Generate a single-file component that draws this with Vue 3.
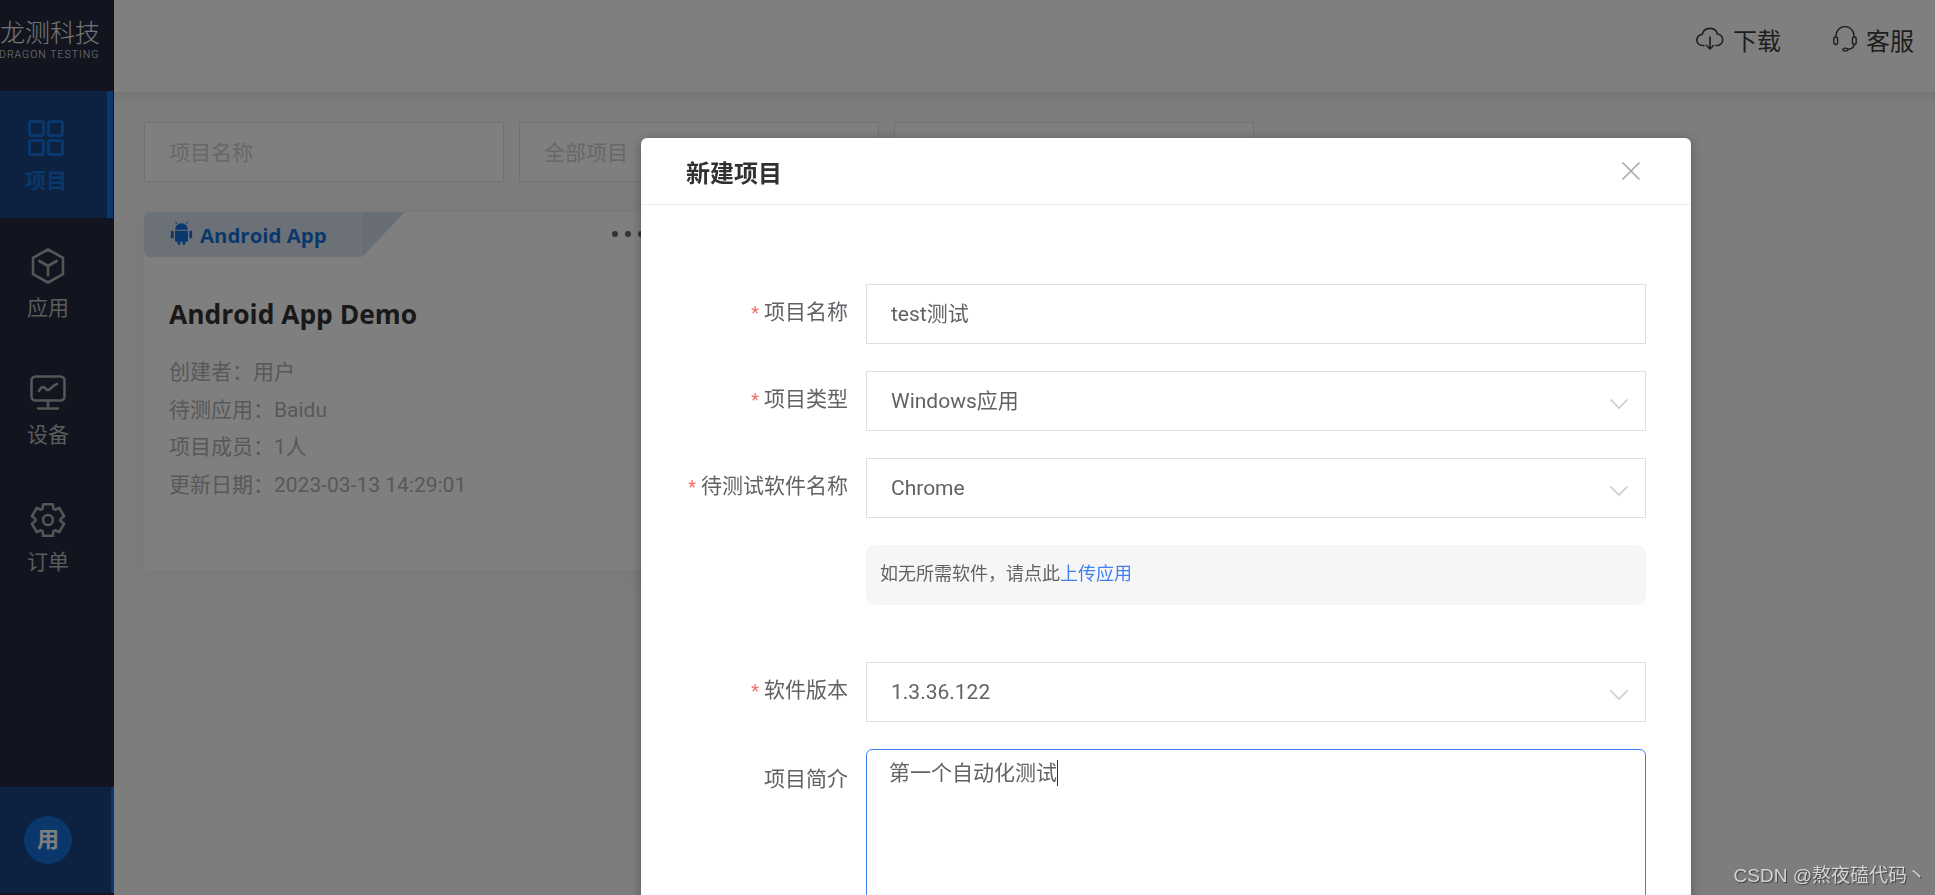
<template>
  <div class="layout">
    <aside class="sidebar">
      <div class="logo">
        <div class="logo-cn">龙测科技</div>
        <div class="logo-en">DRAGON TESTING</div>
      </div>
      <nav class="nav">
        <div
          v-for="item in navItems"
          :key="item.key"
          :class="['nav-item', { active: item.key === 'project' }]"
        >
          <svg v-if="item.key === 'project'" class="nav-icon" viewBox="0 0 36 36" fill="none" stroke="currentColor" stroke-width="3">
            <rect x="1.500" y="1.500" width="14" height="14" rx="2" />
            <rect x="20.500" y="1.500" width="14" height="14" rx="2" />
            <rect x="1.500" y="20.500" width="14" height="14" rx="2" />
            <rect x="20.500" y="20.500" width="14" height="14" rx="2" />
          </svg>
          <svg v-else-if="item.key === 'app'" class="nav-icon dim" viewBox="0 0 36 36" fill="none" stroke="currentColor" stroke-width="2.600" stroke-linejoin="round">
            <path d="M18 1.500 33 9.800V26.200L18 34.500 3 26.200V9.800Z" />
            <path d="M8.500 12.500 18 18 27.500 12.500M18 18V28.500" />
          </svg>
          <svg v-else-if="item.key === 'device'" class="nav-icon dim" viewBox="0 0 36 36" fill="none" stroke="currentColor" stroke-width="2.600" stroke-linecap="round" stroke-linejoin="round">
            <rect x="1.500" y="1.500" width="33" height="24" rx="4" />
            <path d="M9 16c2-4 4-5 6-3s3 3 5 1 4-4 7-5" />
            <path d="M18 26v5M8 33.500h20" />
          </svg>
          <svg v-else class="nav-icon dim" viewBox="0 0 36 36" fill="none" stroke="currentColor" stroke-width="2.600" stroke-linejoin="round">
            <path :d="gearPath" />
            <circle cx="18" cy="18" r="5" />
          </svg>
          <span>{{ item.label }}</span>
        </div>
      </nav>
      <div class="user">
        <div class="avatar">用</div>
      </div>
    </aside>

    <main class="main">
      <header class="topbar">
        <div class="top-link">
          <svg class="top-icon" viewBox="0 0 28 26" fill="none" stroke="currentColor" stroke-width="1.600" stroke-linecap="round" stroke-linejoin="round">
            <path d="M8 19.500H6.500a5.500 5.500 0 0 1-.4-11A8 8 0 0 1 21.500 8a5.800 5.800 0 0 1 .2 11.500H20" />
            <path d="M14 11v12M10.500 19.500 14 23l3.500-3.500" />
          </svg>
          <span>下载</span>
        </div>
        <div class="top-link">
          <svg class="head-icon" viewBox="0 0 24 26" fill="none" stroke="currentColor" stroke-width="1.400" stroke-linecap="round">
            <path d="M3 11V9.500a9 9 0 0 1 18 0V11" />
            <rect x="0.800" y="11" width="3.800" height="7.500" rx="1.900" />
            <rect x="19.400" y="11" width="3.800" height="7.500" rx="1.900" />
            <path d="M21 18.500c0 2.500-2.500 4.500-6 4.800" />
            <ellipse cx="12.500" cy="23.500" rx="2.500" ry="1.400" />
          </svg>
          <span>客服</span>
        </div>
      </header>

      <section class="content">
        <div class="filters">
          <div class="filter">项目名称</div>
          <div class="filter">全部项目</div>
          <div class="filter"></div>
        </div>

        <div class="card">
          <div class="card-tag">
            <div class="tag-body">
              <svg class="android" viewBox="0 0 24 26" fill="currentColor">
                <path d="M5 9.500a7 7 0 0 1 14 0Z" />
                <path d="M7 3 5.500.8M17 3l1.500-2.200" stroke="currentColor" stroke-width="1.200" />
                <path d="M5 10.500h14v10.500a1.500 1.500 0 0 1-1.500 1.500H6.500A1.500 1.500 0 0 1 5 21Z" />
                <rect x="0.500" y="10.500" width="3" height="8.500" rx="1.500" />
                <rect x="20.500" y="10.500" width="3" height="8.500" rx="1.500" />
                <rect x="7.800" y="20" width="3" height="6" rx="1.500" />
                <rect x="13.200" y="20" width="3" height="6" rx="1.500" />
              </svg>
              <span>Android App</span>
            </div>
            <div class="tag-corner"></div>
            <div class="card-more">
              <i></i><i></i><i></i>
            </div>
          </div>
          <div class="card-body">
            <h3>Android App Demo</h3>
            <p v-for="row in cardRows" :key="row">{{ row }}</p>
          </div>
        </div>
      </section>
    </main>

    <div class="mask">
      <div class="dialog">
        <div class="dialog-header">
          <span>新建项目</span>
          <svg class="close" viewBox="0 0 20 20" fill="none" stroke="currentColor" stroke-width="1.600">
            <path d="M1.500 1.500 18.500 18.500M18.500 1.500 1.500 18.500" />
          </svg>
        </div>
        <div class="dialog-body">
          <div class="form-row">
            <label class="required">项目名称</label>
            <div class="field">test测试</div>
          </div>
          <div class="form-row">
            <label class="required">项目类型</label>
            <div class="field select">
              Windows应用
              <svg class="chevron" viewBox="0 0 20 12" fill="none" stroke="currentColor" stroke-width="1.700"><path d="M1.500 1.500 10 10l8.500-8.500" /></svg>
            </div>
          </div>
          <div class="form-row">
            <label class="required">待测试软件名称</label>
            <div class="field select">
              Chrome
              <svg class="chevron" viewBox="0 0 20 12" fill="none" stroke="currentColor" stroke-width="1.700"><path d="M1.500 1.500 10 10l8.500-8.500" /></svg>
            </div>
          </div>
          <div class="form-row tip-row">
            <label></label>
            <div class="tip">如无所需软件，请点此<a>上传应用</a></div>
          </div>
          <div class="form-row">
            <label class="required">软件版本</label>
            <div class="field select">
              1.3.36.122
              <svg class="chevron" viewBox="0 0 20 12" fill="none" stroke="currentColor" stroke-width="1.700"><path d="M1.500 1.500 10 10l8.500-8.500" /></svg>
            </div>
          </div>
          <div class="form-row">
            <label class="intro-label">项目简介</label>
            <div class="textarea">第一个自动化测试<span class="caret"></span></div>
          </div>
        </div>
      </div>
    </div>

    <div class="watermark">CSDN @熬夜磕代码丶</div>
  </div>
</template>

<script setup>
const navItems = [
  { key: 'project', label: '项目' },
  { key: 'app', label: '应用' },
  { key: 'device', label: '设备' },
  { key: 'order', label: '订单' }
];

const cardRows = [
  '创建者：用户',
  '待测应用：Baidu',
  '项目成员：1人',
  '更新日期：2023-03-13 14:29:01'
];

// 六齿齿轮轮廓
const gearPath = (() => {
  const pts = [];
  for (let i = 0; i < 6; i++) {
    const a = (Math.PI / 3) * i;
    [[-0.44, 12.5], [-0.3, 16.5], [0.3, 16.5], [0.44, 12.5]].forEach(([d, r]) => {
      pts.push(`${(18 + r * Math.sin(a + d)).toFixed(2)} ${(18 - r * Math.cos(a + d)).toFixed(2)}`);
    });
  }
  return `M${pts.join('L')}Z`;
})();
</script>

<style>
html,
body {
  margin: 0;
  overflow: hidden;
}
</style>

<style scoped>
.layout {
  display: flex;
  height: 895px;
  overflow: hidden;
  font-family: Roboto, "Noto Sans CJK SC", sans-serif;
  color: #333;
}

.sidebar {
  width: 114px;
  flex-shrink: 0;
  background: #242a3e;
  display: flex;
  flex-direction: column;
  color: #b8b8b8;
}

.logo {
  height: 91px;
  overflow: hidden;
  padding-top: 20px;
  box-sizing: border-box;
  color: #e8e8e8;
}

.logo-cn {
  font-size: 25px;
  line-height: 28px;
  font-weight: 300;
  white-space: nowrap;
}

.logo-en {
  font-size: 10.500px;
  line-height: 14px;
  font-weight: 300;
  letter-spacing: 1px;
  white-space: nowrap;
  margin-left: -1px;
}

.nav {
  flex: 1;
}

.nav-item {
  height: 127px;
  box-sizing: border-box;
  padding: 30px 18px 0 0;
  display: flex;
  flex-direction: column;
  align-items: center;
  gap: 10px;
  font-size: 21px;
  line-height: 28px;
}

.nav-item.active {
  background: #1a4280;
  border-right: 6px solid #1470d8;
  padding: 29px 15px 0 0;
  gap: 11px;
  width: 113px;
  color: #1470d8;
  font-weight: 700;
}

.nav-icon {
  width: 36px;
  height: 36px;
}

.nav-icon.dim {
  color: #acacac;
}

.user {
  height: 106px;
  margin-bottom: 2px;
  background: #1a4280;
  border-right: 3px solid #1470d8;
  display: flex;
  align-items: center;
  justify-content: center;
  padding-right: 15px;
  box-sizing: border-box;
}

.avatar {
  width: 48px;
  height: 48px;
  border-radius: 50%;
  background: #1470d8;
  color: #fff;
  font-size: 22px;
  font-weight: 700;
  line-height: 48px;
  text-align: center;
}

.main {
  flex: 1;
  min-width: 0;
  display: flex;
  flex-direction: column;
}

.topbar {
  height: 92px;
  flex-shrink: 0;
  background: #fff;
  display: flex;
  justify-content: flex-end;
  align-items: center;
  gap: 52px;
  padding: 0 21px 14px 0;
  box-sizing: border-box;
  color: #3c3c3c;
}

.top-link {
  display: flex;
  align-items: center;
  gap: 9px;
  font-size: 24px;
}

.top-icon {
  width: 28px;
  height: 26px;
}

.head-icon {
  width: 24px;
  height: 26px;
}

.content {
  flex: 1;
  background: #fafafa;
  padding: 30px 30px 0;
  box-shadow: inset 0 10px 10px -6px rgba(0, 0, 0, 0.07);
}

.filters {
  display: flex;
  gap: 15px;
}

.filter {
  width: 360px;
  height: 60px;
  box-sizing: border-box;
  border: 1px solid #e2e2e2;
  background: #fff;
  padding-left: 24px;
  font-size: 21px;
  line-height: 60px;
  color: #cfcfcf;
}

.card {
  width: 740px;
  height: 359px;
  margin-top: 30px;
  background: #fff;
  border-radius: 6px;
  box-shadow: 0 2px 20px rgba(0, 0, 0, 0.06);
  overflow: hidden;
}

.card-tag {
  display: flex;
  height: 45px;
  position: relative;
}

.tag-body {
  width: 218px;
  box-sizing: border-box;
  background: #d8e2ee;
  border-radius: 6px 0 0 6px;
  padding-left: 26px;
  display: flex;
  align-items: center;
  gap: 7px;
  color: #1470d8;
  font-family: "Open Sans", "Noto Sans CJK SC", sans-serif;
  font-size: 20.400px;
  font-weight: 700;
  border-right: 1px solid #e4eaf2;
}

.android {
  width: 23px;
  height: 24px;
  margin-top: -4px;
}

.tag-corner {
  width: 43px;
  height: 45px;
  background: #d2dcea;
  clip-path: polygon(0 0, 100% 0, 0 100%);
}

.card-more {
  position: absolute;
  left: 468px;
  top: 19px;
  display: flex;
  gap: 7px;
}

.card-more i {
  width: 6px;
  height: 6px;
  border-radius: 50%;
  background: #666;
}

.card-body {
  padding: 38px 25px;
}

.card-body h3 {
  margin: 0 0 21px;
  font-family: "Open Sans", "Noto Sans CJK SC", sans-serif;
  font-size: 26.400px;
  line-height: 38px;
  font-weight: 700;
  color: #333;
}

.card-body p {
  margin: 0;
  font-size: 21px;
  line-height: 37.500px;
  color: #b0b0b0;
}

.mask {
  position: fixed;
  inset: 0;
  background: rgba(0, 0, 0, 0.5);
  padding: 138px 0 0 641px;
}

.dialog {
  width: 1050px;
  height: 900px;
  background: #fff;
  border-radius: 6px;
  box-shadow: 0 2px 12px rgba(0, 0, 0, 0.3);
}

.dialog-header {
  height: 67px;
  box-sizing: border-box;
  border-bottom: 1px solid #ebeef5;
  display: flex;
  align-items: center;
  justify-content: space-between;
  padding: 0 50px 0 45px;
  font-size: 24px;
  font-weight: 700;
  color: #303133;
}

.close {
  width: 20px;
  height: 20px;
  color: #a8a8a8;
}

.dialog-body {
  padding: 79px 45px 0 0;
}

.form-row {
  display: flex;
  gap: 18px;
  margin-bottom: 27px;
}

.form-row label {
  width: 207px;
  flex-shrink: 0;
  text-align: right;
  font-size: 21px;
  line-height: 56px;
  color: #606266;
}

.required::before {
  content: "*";
  color: #f56c6c;
  font-size: 18px;
  margin-right: 5px;
}

.field {
  flex: 1;
  height: 60px;
  box-sizing: border-box;
  border: 1px solid #dcdfe6;
  padding-left: 24px;
  font-size: 21px;
  line-height: 59px;
  color: #606266;
  position: relative;
}

.chevron {
  position: absolute;
  right: 16px;
  top: 26px;
  width: 20px;
  height: 12px;
  color: #c8ccd4;
}

.tip-row {
  margin-bottom: 57px;
}

.tip {
  flex: 1;
  height: 60px;
  box-sizing: border-box;
  background: #f6f6f6;
  border-radius: 8px;
  padding-left: 14px;
  font-size: 18px;
  line-height: 57px;
  color: #606266;
}

.tip a {
  color: #3f7ff0;
}

.intro-label {
  padding-top: 2px;
}

.textarea {
  flex: 1;
  height: 300px;
  box-sizing: border-box;
  border: 1px solid #3f7ff0;
  border-radius: 6px;
  padding: 6px 22px;
  font-size: 21px;
  line-height: 34px;
  color: #606266;
}

.caret {
  display: inline-block;
  width: 1px;
  height: 26px;
  background: #303133;
  vertical-align: -6px;
}

.watermark {
  position: absolute;
  right: 9px;
  bottom: 6px;
  font-size: 19px;
  line-height: 26px;
  color: #d4d4d4;
  text-shadow: 1px 1px 1px rgba(0, 0, 0, 0.5);
  white-space: nowrap;
  font-family: "Liberation Sans", "Noto Sans CJK SC", sans-serif;
}
</style>
